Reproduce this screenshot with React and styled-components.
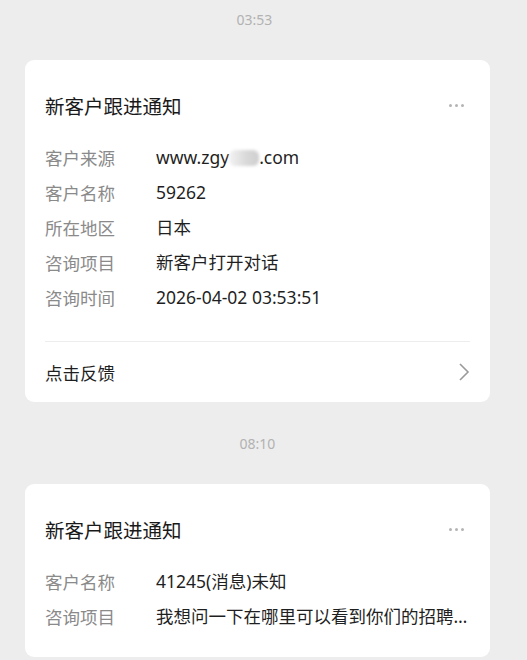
import React from "react";
import styled, { createGlobalStyle } from "styled-components";

const Global = createGlobalStyle`
  html, body {
    margin: 0;
    padding: 0;
    background: #ededed;
  }
  body {
    font-family: "Noto Sans", "Noto Sans CJK SC", sans-serif;
    -webkit-font-smoothing: antialiased;
  }
`;

const Page = styled.div`
  display: flex;
  flex-direction: column;
  padding: 0 37px 0 25px;
  min-height: 660px;
  box-sizing: border-box;
`;

const TimeStamp = styled.div`
  padding: 10px 0 30px;
  text-align: center;
  font-size: 14px;
  line-height: 20px;
  color: #b2b2b2;
  margin-left: ${(p) => p.$shift || 0}px;
`;

const Card = styled.div`
  background: #ffffff;
  border-radius: 9px;
  padding: 0 20px;
  margin-bottom: 22px;
`;

const Header = styled.div`
  display: flex;
  align-items: center;
  justify-content: space-between;
  padding: 32px 0 20px;
`;

const Title = styled.div`
  font-size: 19.5px;
  line-height: 28px;
  color: #191919;
  font-family: "Noto Sans CJK SC", sans-serif;
`;

const Dots = styled.div`
  display: flex;
  gap: 3px;
  margin-right: 6px;
  margin-top: -2px;
`;

const Dot = styled.span`
  width: 3px;
  height: 3px;
  border-radius: 50%;
  background: #b4b4b4;
`;

const Fields = styled.div`
  display: flex;
  flex-direction: column;
  padding-bottom: ${(p) => (p.$last ? 23 : 26)}px;
`;

const Row = styled.div`
  display: grid;
  grid-template-columns: 111px minmax(0, 1fr);
  height: 35px;
  align-items: center;
  font-size: 17.5px;
  line-height: 35px;
`;

const Label = styled.span`
  color: #8a8a8a;
  font-family: "Noto Sans CJK SC", sans-serif;
`;

const Value = styled.span`
  color: #1f1f1f;
  white-space: nowrap;
  overflow: hidden;
  text-overflow: ellipsis;
  padding-right: 2px;
`;

const Blur = styled.span`
  display: inline-block;
  width: 30px;
  height: 16px;
  vertical-align: -2px;
  background: linear-gradient(90deg, #f3f3f3, #d8d8d8 60%, #cfcfcf);
  filter: blur(1.5px);
  border-radius: 6px;
`;

const Footer = styled.div`
  display: flex;
  align-items: center;
  justify-content: space-between;
  height: 60px;
  border-top: 1px solid #ededed;
  font-size: 17.5px;
  color: #1f1f1f;
  font-family: "Noto Sans CJK SC", sans-serif;
`;

const Chevron = () => (
  <svg width="12" height="20" viewBox="0 0 12 20">
    <path d="M2 2 L10 10 L2 18" fill="none" stroke="#9a9a9a" strokeWidth="1.6" />
  </svg>
);

const card1 = [
  ["客户来源", <>www.zgy<Blur />.com</>],
  ["客户名称", "59262"],
  ["所在地区", "日本"],
  ["咨询项目", "新客户打开对话"],
  ["咨询时间", "2026-04-02 03:53:51"],
];

const card2 = [
  ["客户名称", "41245(消息)未知"],
  ["咨询项目", "我想问一下在哪里可以看到你们的招聘信息和具体的岗位要求"],
];

const Notice = ({ rows, footer }) => (
  <Card>
    <Header>
      <Title>新客户跟进通知</Title>
      <Dots>
        <Dot />
        <Dot />
        <Dot />
      </Dots>
    </Header>
    <Fields $last={!footer}>
      {rows.map(([l, v], i) => (
        <Row key={i}>
          <Label>{l}</Label>
          <Value>{v}</Value>
        </Row>
      ))}
    </Fields>
    {footer && (
      <Footer>
        <span>点击反馈</span>
        <Chevron />
      </Footer>
    )}
  </Card>
);

export default function App() {
  return (
    <>
      <Global />
      <Page>
        <TimeStamp $shift={-6}>03:53</TimeStamp>
        <Notice rows={card1} footer />
        <TimeStamp>08:10</TimeStamp>
        <Notice rows={card2} />
      </Page>
    </>
  );
}
